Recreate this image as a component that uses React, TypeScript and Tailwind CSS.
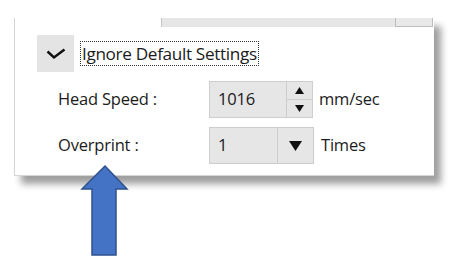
import React from 'react'

const font = { fontFamily: '"Open Sans", "Noto Sans", sans-serif' }

function UpArrow() {
  // blue annotation arrow pointing at the overprint field
  return (
    <svg className="absolute left-[80px] top-[164px]" width="50" height="94" viewBox="0 0 50 94">
      <path
        d="M25 2 L47 25 L36 25 L36 91 L12 91 L12 25 L2 25 Z"
        fill="#4472c4"
        stroke="#2f528f"
        strokeWidth="1.5"
        strokeLinejoin="miter"
      />
    </svg>
  )
}

export default function App() {
  return (
    <div className="relative w-[470px] h-[264px] bg-white overflow-hidden text-[#1b1b1b]" style={font}>
      <div className="ml-[14px] mt-[18px] w-[420px] h-[158px] bg-white border-l border-b border-[#d4d4d4] shadow-[7px_8px_7px_rgba(0,0,0,0.38)]">
        {/* cut-off control at the top */}
        <div className="ml-[146px] w-[272px] h-[9px] flex bg-[#e6e6e6] border-l border-[#c4c4c4]">
          <div className="flex-1" />
          <div className="w-[38px] border-x border-b border-[#bdbdbd] bg-[#e9e9e9]" />
        </div>

        <div className="flex items-center mt-[8px] ml-[22px] gap-[6px]">
          <div className="w-[37px] h-[37px] bg-[#e4e4e4] flex items-center justify-center">
            <svg width="20" height="12" viewBox="0 0 20 12">
              <path d="M1.5 3.5 L8 9.5 L18.5 1.5" fill="none" stroke="#111" strokeWidth="2.4" />
            </svg>
          </div>
          <div className="h-[25px] pl-[1px] pr-[1px] border border-dotted border-[#333] flex items-center text-[17.2px] leading-none tracking-[-0.35px]">
            Ignore Default Settings
          </div>
        </div>

        <div className="mt-[9px] ml-[43px] flex flex-col gap-[9px] text-[16.5px] tracking-[-0.2px]">
          <div className="flex items-center h-[37px]">
            <div className="w-[151px]">Head Speed :</div>
            <div className="flex h-[37px] w-[104px] border border-[#cdcdcd] bg-[#e6e6e6]">
              <div className="flex-1 flex items-center pl-[8px]">1016</div>
              <div className="w-[26px] border-l border-[#cdcdcd] flex flex-col">
                <div className="flex-1 flex items-center justify-center border-b border-[#cdcdcd]">
                  <svg width="9" height="7" viewBox="0 0 9 7"><path d="M4.5 0 L9 7 L0 7 Z" fill="#111" /></svg>
                </div>
                <div className="flex-1 flex items-center justify-center">
                  <svg width="9" height="7" viewBox="0 0 9 7"><path d="M0 0 L9 0 L4.5 7 Z" fill="#111" /></svg>
                </div>
              </div>
            </div>
            <div className="ml-[6px]">mm/sec</div>
          </div>

          <div className="flex items-center h-[37px]">
            <div className="w-[151px]">Overprint :</div>
            <div className="flex h-[37px] w-[105px] border border-[#cdcdcd] bg-[#e6e6e6]">
              <div className="w-[67px] flex items-center pl-[8px]">1</div>
              <div className="flex-1 border-l border-[#cdcdcd] flex items-center justify-center">
                <svg width="13" height="10" viewBox="0 0 13 10"><path d="M0 0 L13 0 L6.5 10 Z" fill="#111" /></svg>
              </div>
            </div>
            <div className="ml-[7px]">Times</div>
          </div>
        </div>
      </div>

      <UpArrow />
    </div>
  )
}
